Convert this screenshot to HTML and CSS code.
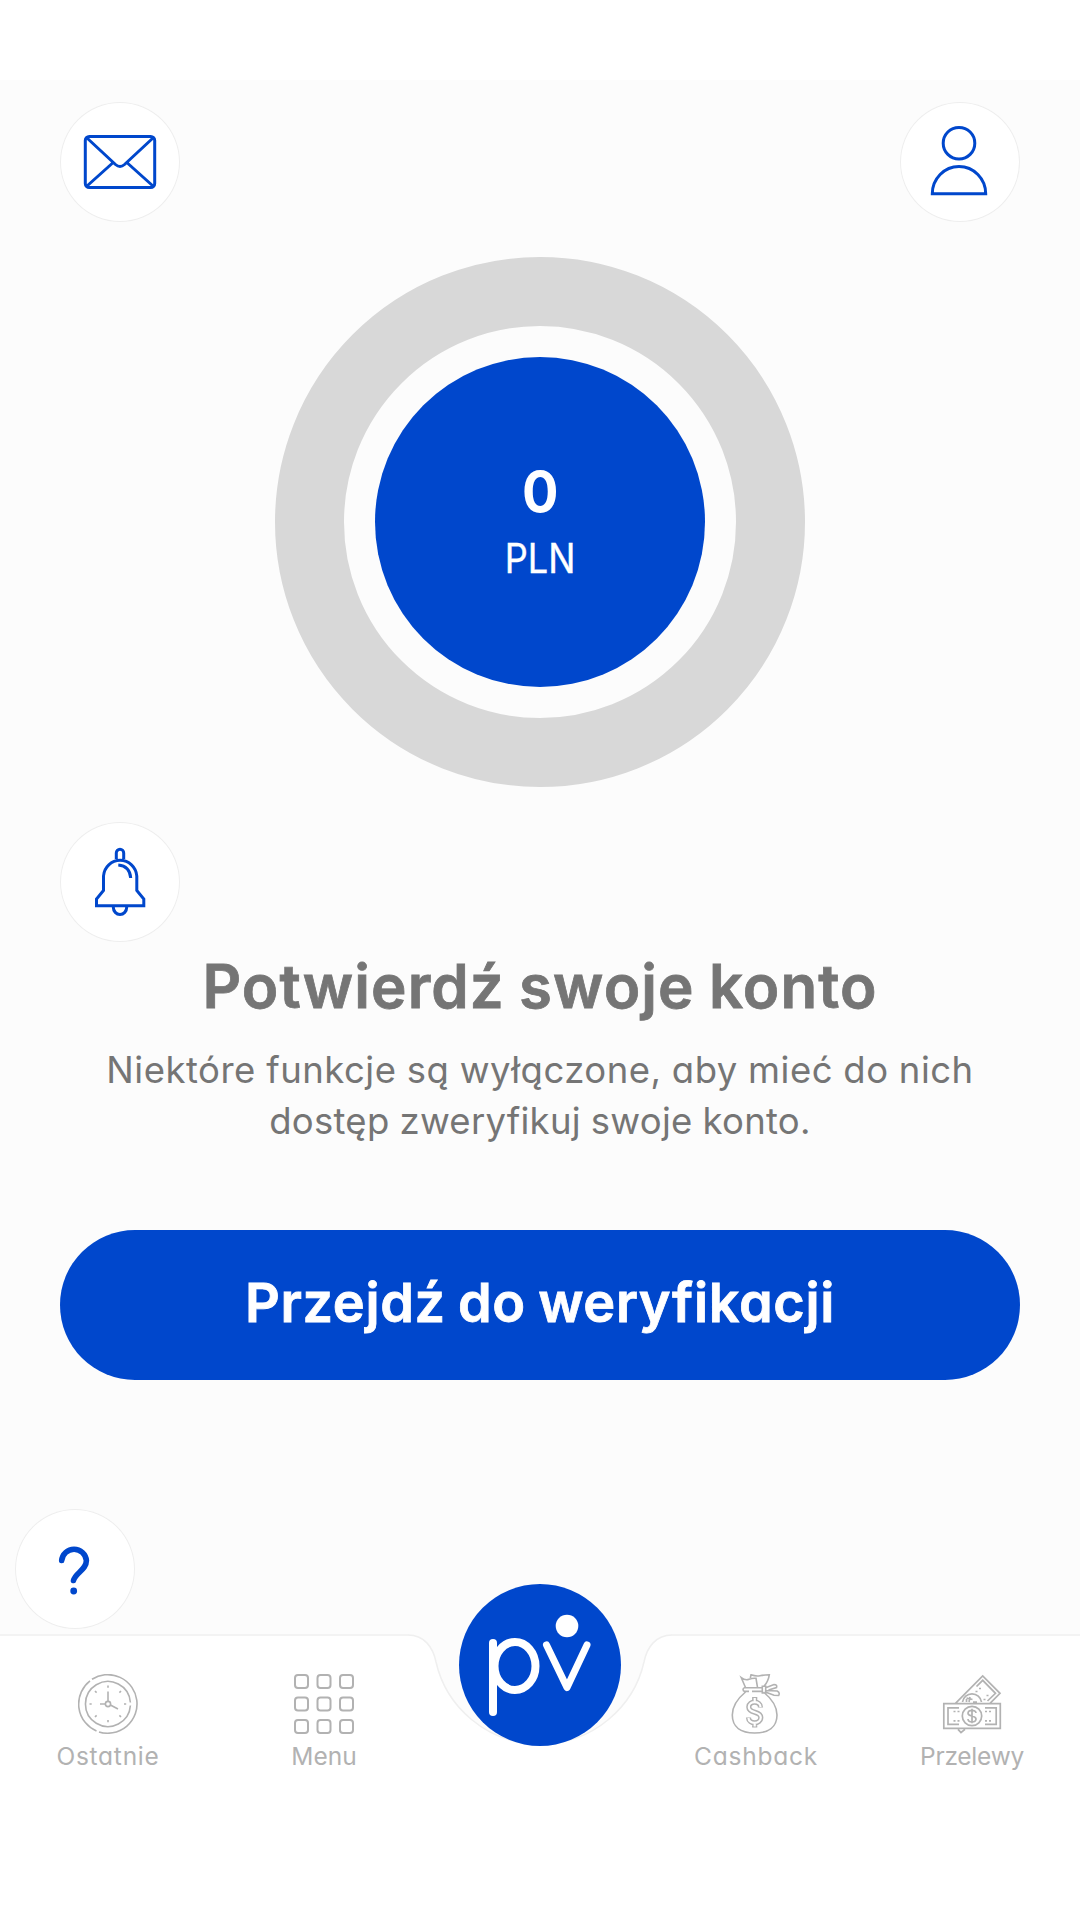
FILE: index.html
```html
<!DOCTYPE html>
<html lang="pl">
<head>
<meta charset="utf-8">
<title>Konto</title>
<link rel="stylesheet" href="styles.css">
</head>
<body>
<div class="status-bar"></div>
<main class="screen">
  <header class="top-bar">
    <button class="round-button" aria-label="Wiadomości">
      <svg class="line-icon" viewBox="0 0 120 120"><rect x="25.3" y="34.5" width="69.4" height="51" rx="4"/><path d="M27 36l28.500 26.500q4.500 4 9 0L93 36M27 84l26.200-23.500M93 84L66.800 60.500"/></svg>
    </button>
    <button class="round-button" aria-label="Profil">
      <svg class="line-icon" viewBox="0 0 120 120"><circle cx="59" cy="41.200" r="15.800"/><path d="M32.300 91.800a26.700 27.300 0 0 1 53.400 0z"/></svg>
    </button>
  </header>
  <section class="balance">
    <div class="balance-disc"><strong class="amount">0</strong><span class="currency">PLN</span></div>
  </section>
  <button class="round-button" aria-label="Powiadomienia">
    <svg class="line-icon" viewBox="0 0 120 120"><path d="M36.500 83.700V77l7-8.500V54a16.700 17 0 0 1 33.300 0v14.500l7 8.500V83.700zM56.300 37v-6a3.700 3.700 0 0 1 7.400 0v6M53.300 85.300a6.700 7.200 0 0 0 13.400 0M58.300 43q11.500 1 12.400 13"/></svg>
  </button>
  <section class="notice">
    <h1 class="title">Potwierdź swoje konto</h1>
    <p class="text">Niektóre funkcje są wyłączone, aby mieć do nich<br><span class="text-end">dostęp zweryfikuj swoje konto.</span></p>
  </section>
  <button class="primary">Przejdź do weryfikacji</button>
  <button class="round-button help" aria-label="Pomoc">
    <svg class="help-icon" viewBox="0 0 120 120"><path d="M46.700 51.500a12.400 12.400 0 0 1 24.700 0C71.400 61 60 64 58.500 71.500"/><circle cx="58.700" cy="82" r="3.400"/></svg>
  </button>
</main>
<nav class="tab-bar">
  <svg class="tab-shape" viewBox="0 0 1080 286"><path d="M-2 1H408C424 1 433 13 436 28C446 72 486 110 540 110S634 72 644 28C647 13 656 1 672 1H1082V290H-2z"/></svg>
  <a class="tab">
    <svg class="tab-icon" viewBox="0 0 60 60"><path d="M14 5.200A29.300 29.300 0 1 1 21 57.900M18.500 57A29.300 29.300 0 0 1 12 6.900M52.400 28.500A22.500 22.500 0 1 0 52.400 31.500"/><circle cx="30" cy="30" r="2.600"/><path d="M30 27.400V17.500M27.400 30H22M32.400 31l7.600 4M30 11.500v2.200M30 46v2.200M11.500 30h2.200M46 30h2.200M17 17l1.600 1.600M43 17l-1.600 1.600M17 43l1.600-1.600M43 43l-1.600-1.600"/></svg>
    <span class="tab-label wide">Ostatnie</span>
  </a>
  <a class="tab">
    <svg class="tab-icon grid-icon" viewBox="0 0 60 60"><rect x="1" y="1" width="13" height="13" rx="3"/><rect x="23.500" y="1" width="13" height="13" rx="3"/><rect x="46" y="1" width="13" height="13" rx="3"/><rect x="1" y="23.500" width="13" height="13" rx="3"/><rect x="23.500" y="23.500" width="13" height="13" rx="3"/><rect x="46" y="23.500" width="13" height="13" rx="3"/><rect x="1" y="46" width="13" height="13" rx="3"/><rect x="23.500" y="46" width="13" height="13" rx="3"/><rect x="46" y="46" width="13" height="13" rx="3"/></svg>
    <span class="tab-label">Menu</span>
  </a>
  <a class="fab" aria-label="Start">
    <svg class="logo" viewBox="0 0 162 162"><path d="M34 59V128"/><ellipse cx="56" cy="82" rx="20.500" ry="24"/><path class="arms" d="M87.500 61L108 103.500L128 61"/><circle class="dot" cx="108" cy="42" r="11.300"/></svg>
  </a>
  <a class="tab">
    <svg class="tab-icon" viewBox="0 0 60 60"><path d="M19.500 18C11 25 6.300 33 6.300 41C6.300 53 15 59 28.700 59S51 53 51 41C51 33 46 25 37.500 18M23 17.400H18.500a1.900 1.900 0 0 1 0-3.700H36.300M26 17.400H36.300M36.300 12.300h3.400v6.700h-3.400zM39.700 13.700L48 10.500q3.500 0 2.500 3l-8 2.500M39.700 16.500l11.500.5q3 1.500 1.500 4.500l-4.700-.3-8-3M19.500 13.500L15.300 3.700q4 3 7.700 1.600t7-1l1.500 9M24.300 4L25 .8q5 1.700 9 .9t9.300-.9q-1 6.500-5.300 11.500"/><g class="money-sign"><path d="M28.700 23v5M28.700 48v5.500M34.500 33.500C34.500 26.500 22.800 26.500 22.800 33C22.800 40 34.800 36.500 34.800 43.500C34.800 50.500 22.500 50.500 22.500 43.500"/><path class="core" d="M28.700 24v4M28.700 48v4.500M34.500 33C34.500 26.500 22.800 26.500 22.800 33C22.800 40 34.800 36.500 34.800 43.500C34.800 50.500 22.500 50.500 22.500 44"/></g></svg>
    <span class="tab-label wide">Cashback</span>
  </a>
  <a class="tab">
    <svg class="tab-icon note-icon" viewBox="0 0 60 60"><path d="M1.800 29.700H58.300V54.400H1.800zM17 33.900H6V50.400H17M43 33.900H54.200V50.400H43M13.500 29.300L40.700 2L58 19.300L48 29.300M34.500 12.500L40.700 6.300L53.500 19.300L45.500 27M20.500 28a9.600 9.600 0 0 1 19 0M16 55.300L19 58.500L23 55.300M24.500 28v-3M24.500 24l6 1.500M28 23l-1 5M31 28h4"/><circle cx="30" cy="42" r="9.700"/><path d="M34 39C34 35.500 26 35.500 26 39.300C26 43 34 41 34 45C34 48.800 26 48.800 26 45M30 34.700V49.300"/><path d="M11.500 37.500h2M15.500 37.500h2M11.500 46.800h2M15.500 46.800h2M43 37.500h2M47 37.500h2M43 46.800h2M47 46.800h2M33.500 17.500h2M37 14.500h2M41.500 25.500h2M44.500 21.500h2"/></svg>
    <span class="tab-label snug">Przelewy</span>
  </a>
</nav>
</body>
</html>
```
FILE: styles.css
```css
* { box-sizing: border-box; }
body {
  margin: 0;
  width: 1080px;
  height: 1920px;
  overflow: hidden;
  background: #fff;
  color: #757575;
  font-family: Inter, "Noto Sans", sans-serif;
  font-feature-settings: "cv11";
}
button { margin: 0; padding: 0; border: 0; font: inherit; font-feature-settings: inherit; }
.status-bar { height: 80px; }
.screen {
  height: 1554px;
  padding: 22px 60px 0;
  background: #fcfcfc;
  display: flex;
  flex-direction: column;
}
.top-bar { display: flex; justify-content: space-between; }
.round-button {
  width: 120px;
  height: 120px;
  flex: none;
  border-radius: 50%;
  background: #fff;
  box-shadow: inset 0 0 0 1px #eee;
}
.round-button svg { display: block; width: 120px; height: 120px; }
.line-icon { fill: none; stroke: #0047cc; stroke-width: 3; }
.balance {
  width: 530px;
  height: 530px;
  margin: 35px auto;
  border: 69px solid #d8d8d8;
  border-radius: 50%;
  display: flex;
  align-items: center;
  justify-content: center;
}
.balance-disc {
  width: 330px;
  height: 330px;
  flex: none;
  padding-top: 99px;
  border-radius: 50%;
  background: #0047cc;
  color: #fff;
  display: flex;
  flex-direction: column;
  align-items: center;
}
.amount { font-size: 57px; line-height: 72px; font-weight: 700; transform: scaleX(.95); }
.currency { font-size: 41px; line-height: 60px; -webkit-text-stroke: .4px #fff; transform: scaleX(.88); }
.notice { text-align: center; }
.title { margin: 0; font-size: 60px; line-height: 88px; font-weight: 600; letter-spacing: 1.1px; word-spacing: -2px; -webkit-text-stroke: .8px #757575; white-space: nowrap; }
.text { margin: 15px 0 0; font-size: 36.5px; line-height: 51px; letter-spacing: .5px; word-spacing: -.5px; white-space: nowrap; }
.text-end { letter-spacing: .25px; }
.primary {
  flex: none;
  height: 150px;
  margin-top: 83px;
  padding-bottom: 5px;
  border-radius: 75px;
  background: #0047cc;
  color: #fff;
  font-size: 54px;
  font-weight: 600;
  letter-spacing: .65px;
  word-spacing: -2px;
  -webkit-text-stroke: .8px #fff;
}
.help { margin: 129px 0 0 -45px; }
.help-icon { fill: none; stroke: #0047cc; stroke-width: 5.6; stroke-linecap: round; }
.help-icon circle { fill: #0047cc; stroke: none; }
.tab-bar {
  position: relative;
  height: 286px;
  display: grid;
  grid-template-columns: repeat(5, 1fr);
  justify-items: center;
  align-items: start;
}
.tab-shape { position: absolute; left: 0; top: 0; width: 1080px; height: 286px; fill: #fff; stroke: #efefef; stroke-width: 1.5; background: #fcfcfc; }
.tab { position: relative; padding-top: 40px; display: flex; flex-direction: column; align-items: center; }
.tab-icon { width: 60px; height: 60px; fill: none; stroke: #b2b2b2; stroke-width: 1.6; }
.grid-icon { stroke-width: 2; }
.note-icon { stroke-width: 1.7; }
.money-sign { stroke-width: 5.2; }
.money-sign .core { stroke: #fff; stroke-width: 2.2; }
.tab-label { margin-top: 4px; font-size: 24.5px; line-height: 36px; color: #b2b2b2; }
.tab-label.wide { letter-spacing: .75px; }
.tab-label.snug { letter-spacing: -.25px; }
.fab { position: relative; width: 162px; height: 162px; margin-top: -50px; border-radius: 50%; background: #0047cc; }
.logo { display: block; fill: none; stroke: #fff; stroke-width: 8; stroke-linecap: round; stroke-linejoin: round; }
.logo .arms { stroke-width: 7; }
.logo .dot { fill: #fff; stroke: none; }
```
